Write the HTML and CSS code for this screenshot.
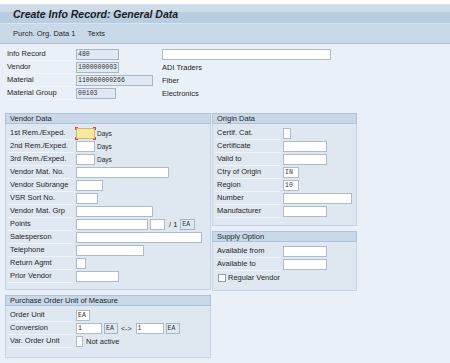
FILE: index.html
```html
<!DOCTYPE html>
<html lang="en">
<head>
    <meta charset="UTF-8">
    <meta name="viewport" content="width=device-width, initial-scale=1.0">
    <title>Create Info Record: General Data</title>
    <link rel="stylesheet" href="styles.css">
</head>
<body>
    <div class="topline"></div>
    <div class="titlebar">
        <h1>Create Info Record: General Data</h1>
    </div>
    <div class="toolbar">
        <span>Purch. Org. Data 1</span>
        <span>Texts</span>
    </div>

    <div class="content">
        <div class="head">
            <div class="row">
                <span class="lbl">Info Record</span>
                <span class="fld"><span class="in ro" style="width:43px">480</span></span>
                <span class="in" style="width:169px"></span>
            </div>
            <div class="row">
                <span class="lbl">Vendor</span>
                <span class="fld"><span class="in ro" style="width:43px">1000000003</span></span>
                <span class="desc">ADI Traders</span>
            </div>
            <div class="row">
                <span class="lbl">Material</span>
                <span class="fld"><span class="in ro" style="width:77px">110000000266</span></span>
                <span class="desc">Fiber</span>
            </div>
            <div class="row">
                <span class="lbl">Material Group</span>
                <span class="fld"><span class="in ro" style="width:40px">00103</span></span>
                <span class="desc">Electronics</span>
            </div>
        </div>

        <div class="columns">
            <div class="col col-left">
                <section class="group vendor">
                    <div class="group-title">Vendor Data</div>
                    <div class="group-body">
                        <div class="row">
                            <span class="lbl">1st Rem./Exped.</span>
                            <span class="focus"><span class="in active" style="width:19px"></span></span>
                            <span class="txt">Days</span>
                        </div>
                        <div class="row">
                            <span class="lbl">2nd Rem./Exped.</span>
                            <span class="in" style="width:19px"></span>
                            <span class="txt">Days</span>
                        </div>
                        <div class="row">
                            <span class="lbl">3rd Rem./Exped.</span>
                            <span class="in" style="width:19px"></span>
                            <span class="txt">Days</span>
                        </div>
                        <div class="row">
                            <span class="lbl">Vendor Mat. No.</span>
                            <span class="in" style="width:93px"></span>
                        </div>
                        <div class="row">
                            <span class="lbl">Vendor Subrange</span>
                            <span class="in" style="width:27px"></span>
                        </div>
                        <div class="row">
                            <span class="lbl">VSR Sort No.</span>
                            <span class="in" style="width:22px"></span>
                        </div>
                        <div class="row">
                            <span class="lbl">Vendor Mat. Grp</span>
                            <span class="in" style="width:77px"></span>
                        </div>
                        <div class="row">
                            <span class="lbl">Points</span>
                            <span class="in" style="width:72px"></span>
                            <span class="in gap" style="width:15px"></span>
                            <span class="txt slash">/ 1</span>
                            <span class="in ro gap" style="width:15px">EA</span>
                        </div>
                        <div class="row">
                            <span class="lbl">Salesperson</span>
                            <span class="in" style="width:126px"></span>
                        </div>
                        <div class="row">
                            <span class="lbl">Telephone</span>
                            <span class="in" style="width:68px"></span>
                        </div>
                        <div class="row">
                            <span class="lbl">Return Agmt</span>
                            <span class="in" style="width:10px"></span>
                        </div>
                        <div class="row">
                            <span class="lbl">Prior Vendor</span>
                            <span class="in" style="width:43px"></span>
                        </div>
                    </div>
                </section>

                <section class="group po">
                    <div class="group-title">Purchase Order Unit of Measure</div>
                    <div class="group-body">
                        <div class="row">
                            <span class="lbl">Order Unit</span>
                            <span class="in" style="width:14px">EA</span>
                        </div>
                        <div class="row">
                            <span class="lbl">Conversion</span>
                            <span class="in" style="width:26px">1</span>
                            <span class="in ro gap" style="width:14px">EA</span>
                            <span class="txt arrow">&lt;-&gt;</span>
                            <span class="in" style="width:28px">1</span>
                            <span class="in ro gap" style="width:14px">EA</span>
                        </div>
                        <div class="row">
                            <span class="lbl">Var. Order Unit</span>
                            <span class="in" style="width:7px"></span>
                            <span class="txt note">Not active</span>
                        </div>
                    </div>
                </section>
            </div>

            <div class="col col-right">
                <section class="group origin">
                    <div class="group-title">Origin Data</div>
                    <div class="group-body">
                        <div class="row">
                            <span class="lbl">Certif. Cat.</span>
                            <span class="in" style="width:8px"></span>
                        </div>
                        <div class="row">
                            <span class="lbl">Certificate</span>
                            <span class="in" style="width:44px"></span>
                        </div>
                        <div class="row">
                            <span class="lbl">Valid to</span>
                            <span class="in" style="width:44px"></span>
                        </div>
                        <div class="row">
                            <span class="lbl">Ctry of Origin</span>
                            <span class="in" style="width:16px">IN</span>
                        </div>
                        <div class="row">
                            <span class="lbl">Region</span>
                            <span class="in" style="width:16px">10</span>
                        </div>
                        <div class="row">
                            <span class="lbl">Number</span>
                            <span class="in" style="width:69px"></span>
                        </div>
                        <div class="row">
                            <span class="lbl">Manufacturer</span>
                            <span class="in" style="width:44px"></span>
                        </div>
                    </div>
                </section>

                <section class="group supply">
                    <div class="group-title">Supply Option</div>
                    <div class="group-body">
                        <div class="row">
                            <span class="lbl">Available from</span>
                            <span class="in" style="width:44px"></span>
                        </div>
                        <div class="row">
                            <span class="lbl">Available to</span>
                            <span class="in" style="width:44px"></span>
                        </div>
                        <div class="row check-row">
                            <span class="check"></span>
                            <span>Regular Vendor</span>
                        </div>
                    </div>
                </section>
            </div>
        </div>
    </div>
</body>
</html>
```

FILE: styles.css
```css
body {
    margin: 0;
    font-family: "Liberation Sans", Arial, sans-serif;
    font-size: 7.5px;
    color: #262626;
    background-color: #e9f0f7;
}

.topline {
    height: 4px;
    background-color: #fff;
    border-bottom: 1px solid #dce5ee;
}

.titlebar {
    height: 18px;
    display: flex;
    align-items: center;
    padding-left: 13px;
    background: linear-gradient(#cedcea 0, #cedcea 40%, #b9cde1 40%, #b9cde1 100%);
    border-bottom: 1px solid #d7e3ee;
}

.titlebar h1 {
    margin: 0;
    font-size: 10.5px;
    font-style: italic;
    font-weight: bold;
    color: #1c1c1c;
}

.toolbar {
    height: 19px;
    display: flex;
    align-items: center;
    gap: 12px;
    padding-left: 13px;
    background-color: #c9d9e8;
    border-bottom: 1px solid #b2c2d2;
}

.content {
    padding: 4px 0 0 5px;
}

.head {
    padding-left: 1px;
    margin-bottom: 13px;
}

.row {
    display: flex;
    align-items: center;
    height: 13px;
}

.lbl {
    box-sizing: border-box;
    height: 13px;
    line-height: 12px;
    width: 70px;
    padding-left: 1px;
    border-bottom: 1px solid #f0f5fa;
    white-space: nowrap;
}

.head .fld {
    width: 86px;
    display: flex;
}

.desc {
    white-space: nowrap;
}

.in {
    box-sizing: border-box;
    display: inline-block;
    height: 11px;
    line-height: 9px;
    padding-left: 1px;
    background-color: #fff;
    border: 1px solid #aebcca;
    font-family: "Liberation Mono", "Courier New", monospace;
    font-size: 6.5px;
    color: #333;
    overflow: hidden;
    white-space: nowrap;
}

.in.ro {
    background-color: #e0e9f2;
    border-color: #a6b6c6;
}

.in.active {
    background-color: #fce99c;
    border-color: #c9b87a;
}

.in.gap {
    margin-left: 2px;
}

.focus {
    display: inline-flex;
    padding: 1px;
    margin-left: -1px;
    margin-right: -1px;
    background:
        linear-gradient(#e04040, #e04040) top left / 3px 1px no-repeat,
        linear-gradient(#e04040, #e04040) top left / 1px 3px no-repeat,
        linear-gradient(#e04040, #e04040) top right / 3px 1px no-repeat,
        linear-gradient(#e04040, #e04040) top right / 1px 3px no-repeat,
        linear-gradient(#e04040, #e04040) bottom left / 3px 1px no-repeat,
        linear-gradient(#e04040, #e04040) bottom left / 1px 3px no-repeat,
        linear-gradient(#e04040, #e04040) bottom right / 3px 1px no-repeat,
        linear-gradient(#e04040, #e04040) bottom right / 1px 3px no-repeat;
}

.txt {
    margin-left: 2px;
    font-size: 6.5px;
    white-space: nowrap;
}

.txt.slash {
    margin-left: 4px;
    margin-right: 1px;
    font-size: 7.5px;
}

.txt.arrow {
    margin: 0 4px 0 3px;
    font-size: 7px;
}

.txt.note {
    margin-left: 3px;
    font-size: 7.5px;
}

.columns {
    display: flex;
    align-items: flex-start;
    gap: 1px;
}

.col {
    display: flex;
    flex-direction: column;
    gap: 5px;
}

.col-left {
    width: 206px;
}

.col-right {
    width: 145px;
}

.group {
    background-color: #dfe8f1;
    border: 1px solid #c4d4e3;
    border-top: none;
}

.group-title {
    box-sizing: border-box;
    height: 11px;
    line-height: 10px;
    margin: 0 -1px;
    padding-left: 4px;
    background-color: #c8d8e8;
    border: 1px solid #afc3d7;
    white-space: nowrap;
}

.group-body {
    padding: 3px 2px 6px;
}

.group .lbl {
    width: 65px;
    padding-left: 2px;
    margin-right: 3px;
}

.origin .group-body {
    padding-bottom: 7px;
}

.supply .group-body {
    padding-bottom: 6px;
}

.po .group-body {
    padding-bottom: 9px;
}

.check-row {
    padding-left: 3px;
}

.check {
    box-sizing: border-box;
    width: 8px;
    height: 8px;
    margin-right: 2px;
    background-color: #fff;
    border: 1px solid #8f9fb0;
}
```
